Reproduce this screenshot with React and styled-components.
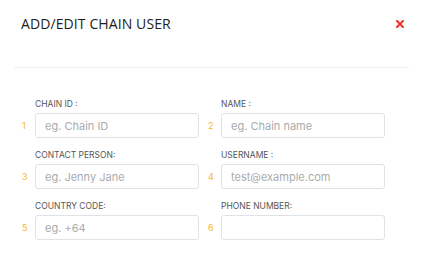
import React from 'react'
import styled, { createGlobalStyle } from 'styled-components'

const GlobalStyle = createGlobalStyle`
   html, body {
      margin: 0;
      padding: 0;
      background: #fff;
   }
   * {
      box-sizing: border-box;
   }
`

const fields = [
   { n: 1, label: 'CHAIN ID :', placeholder: 'eg. Chain ID' },
   { n: 2, label: 'NAME :', placeholder: 'eg. Chain name' },
   { n: 3, label: 'CONTACT PERSON:', placeholder: 'eg. Jenny Jane' },
   { n: 4, label: 'USERNAME :', placeholder: 'test@example.com' },
   { n: 5, label: 'COUNTRY CODE:', placeholder: 'eg. +64' },
   { n: 6, label: 'PHONE NUMBER:', placeholder: '' },
]

const App = () => {
   return (
      <Modal>
         <GlobalStyle />
         <Header>
            <Title>ADD/EDIT CHAIN USER</Title>
            <Close aria-label='close'>
               <svg width='8' height='8' viewBox='0 0 8 8'>
                  <path d='M1 1L7 7M7 1L1 7' stroke='#f0302a' strokeWidth='2' strokeLinecap='square' />
               </svg>
            </Close>
         </Header>
         <Divider />
         <Form>
            {fields.map((f) => (
               <Field key={f.n}>
                  <Label>{f.label}</Label>
                  <Num>{f.n}</Num>
                  <Input placeholder={f.placeholder} />
               </Field>
            ))}
         </Form>
      </Modal>
   )
}

const Modal = styled.div`
   width: 421px;
   height: 262px;
   background: #fff;
   font-family: Inter, 'Liberation Sans', sans-serif;
`
const Header = styled.div`
   display: flex;
   align-items: center;
   justify-content: space-between;
   padding: 13px 17px 0 21px;
   height: 33px;
`
const Title = styled.h2`
   margin: 0;
   font-family: 'Open Sans', sans-serif;
   font-weight: 500;
   font-size: 14px;
   letter-spacing: 0.1px;
   color: #1c1c1c;
`
const Close = styled.button`
   border: 0;
   background: none;
   padding: 0;
   display: flex;
   margin-top: 1px;
`
const Divider = styled.hr`
   margin: 34px 12px 0 14px;
   border: 0;
   border-top: 1px solid #eef0f2;
`
const Form = styled.div`
   display: grid;
   grid-template-columns: 178px 178px;
   column-gap: 8px;
   row-gap: 12px;
   padding: 31px 0 0 21px;
`
const Field = styled.div`
   display: grid;
   grid-template-columns: 14px 164px;
   grid-template-rows: 14px 25px;
   align-items: center;
`
const Label = styled.div`
   grid-column: 2;
   grid-row: 1;
   align-self: start;
   font-size: 8.5px;
   color: #555;
   line-height: 10px;
`
const Num = styled.span`
   grid-column: 1;
   grid-row: 2;
   padding-left: 1px;
   font-size: 9px;
   color: #f5b829;
`
const Input = styled.input`
   grid-column: 2;
   grid-row: 2;
   height: 25px;
   width: 164px;
   border: 1px solid #dfe3e8;
   border-radius: 3px;
   padding: 0 9px;
   font-family: Inter, 'Liberation Sans', sans-serif;
   font-size: 11px;
   color: #333;
   outline: none;
   &::placeholder {
      color: #a9abae;
   }
`

export default App
